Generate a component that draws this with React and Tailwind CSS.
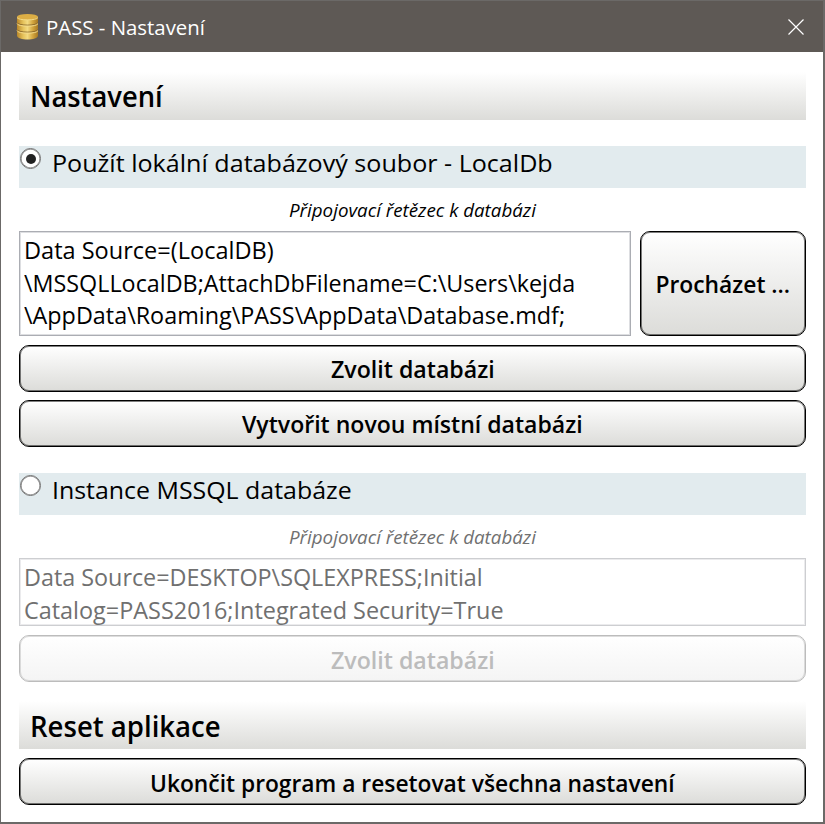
import { useLayoutEffect, useRef, useState } from "react";

// Single line of text condensed horizontally to a given advance width.
function Line({ width, origin = "origin-left", children }) {
  const ref = useRef(null);
  const [scale, setScale] = useState(1);
  useLayoutEffect(() => {
    setScale(width / ref.current.offsetWidth);
  }, [width, children]);
  return (
    <span
      ref={ref}
      className={`inline-block whitespace-pre ${origin}`}
      style={{ transform: `scaleX(${scale})` }}
    >
      {children}
    </span>
  );
}

function DatabaseIcon() {
  return (
    <svg width="24" height="28" viewBox="0 0 24 28" className="shrink-0">
      <defs>
        <linearGradient id="gold" x1="0" x2="1">
          <stop offset="0" stopColor="#b9872a" />
          <stop offset="0.3" stopColor="#e6c35c" />
          <stop offset="0.5" stopColor="#f3da80" />
          <stop offset="0.75" stopColor="#d3a63f" />
          <stop offset="1" stopColor="#a67822" />
        </linearGradient>
      </defs>
      <path d="M2 4V22.5C2 27.8 23 27.8 23 22.5V4Z" fill="url(#gold)" />
      <ellipse cx="12.5" cy="3.8" rx="10.5" ry="2.9" fill="#dcae45" />
      <path d="M2 9.5C3 13 22 13 23 9.5M2 16.5C3 20 22 20 23 16.5" fill="none" stroke="#86652a" strokeWidth="0.9" />
      <path d="M2 4.5C3 7.7 22 7.7 23 4.5M2 10.6C3 14.1 22 14.1 23 10.6M2 17.6C3 21.1 22 21.1 23 17.6" fill="none" stroke="#f3da8a" strokeWidth="1" />
    </svg>
  );
}

function SectionHeader({ width, className = "", children }) {
  return (
    <h2 className={`flex h-12 items-center bg-linear-to-b from-white to-[#dcdcd9] pl-[10.5px] text-[29px] leading-none font-semibold ${className}`}>
      <Line width={width}>{children}</Line>
    </h2>
  );
}

function Option({ checked, width, children }) {
  return (
    <label className="flex h-[42px] bg-[#e2ebee]">
      <span className="mt-[2px] ml-[1px] flex size-[21px] shrink-0 items-center justify-center rounded-full border border-[#707070] bg-white shadow-[inset_0_0_0_0.5px_#707070]">
        {checked && <span className="size-[10px] rounded-full bg-[#212121]" />}
      </span>
      <span className="ml-[11px] text-2xl leading-[33px]">
        <Line width={width}>{children}</Line>
      </span>
    </label>
  );
}

function Button({ width, className = "h-[47px] w-full", disabled, children }) {
  const tone = disabled
    ? "border-[#bcbcbc] to-[#f4f4f4] text-[#bcbcbc] shadow-[inset_0_0_0_1px_#bcbcbc80]"
    : "border-black to-[#dcdcd9] text-black shadow-[inset_0_0_0_1px_#00000080]";
  return (
    <button
      disabled={disabled}
      className={`flex items-center justify-center rounded-[10px] border bg-linear-to-b from-white text-2xl leading-none font-semibold ${tone} ${className}`}
    >
      <Line width={width} origin="origin-center">{children}</Line>
    </button>
  );
}

function Caption({ className, children }) {
  return (
    <p className={`flex h-[43px] items-center justify-center pt-px text-lg leading-none italic ${className}`}>
      <Line width={247} origin="origin-center">{children}</Line>
    </p>
  );
}

export default function App() {
  return (
    <div className="flex h-[824px] w-[825px] flex-col overflow-hidden border border-r-2 border-b-2 border-[#6b6967] bg-white font-['Open_Sans','Noto_Sans',sans-serif] text-black">
      <header className="flex h-[51px] shrink-0 items-center bg-[#5e5955] pl-[14px] text-white">
        <DatabaseIcon />
        <h1 className="ml-[7px] pt-0.5 text-xl leading-none">
          <Line width={159}>PASS - Nastavení</Line>
        </h1>
        <svg width="16" height="16" viewBox="0 0 16 16" className="mr-[19px] ml-auto">
          <path d="M0.5 0.5 15.5 15.5M15.5 0.5 0.5 15.5" stroke="white" strokeWidth="1.2" />
        </svg>
      </header>

      <main className="flex flex-col pt-5 pr-[17px] pl-[18px]">
        <SectionHeader width={133} className="pb-0.5">Nastavení</SectionHeader>

        <section className="mt-[26px] flex flex-col">
          <Option checked width={501}>Použít lokální databázový soubor - LocalDb</Option>
          <Caption className="text-black">Připojovací řetězec k databázi</Caption>
          <div className="flex gap-[9px]">
            <div className="h-[105px] w-[612px] border border-[#abadb3] pt-[2px] pl-1 text-2xl leading-[32.5px] shadow-[inset_0_0_0_1px_#abadb366]">
              <div className="h-[32.5px]"><Line width={250}>Data Source=(LocalDB)</Line></div>
              <div className="h-[32.5px]"><Line width={551}>{"\\MSSQLLocalDB;AttachDbFilename=C:\\Users\\kejda"}</Line></div>
              <div className="h-[32.5px]"><Line width={541}>{"\\AppData\\Roaming\\PASS\\AppData\\Database.mdf;"}</Line></div>
            </div>
            <Button width={135} className="h-[105px] w-[166px]">Procházet ...</Button>
          </div>
          <div className="mt-[9px] flex flex-col gap-2">
            <Button width={164}>Zvolit databázi</Button>
            <Button width={341}>Vytvořit novou místní databázi</Button>
          </div>
        </section>

        <section className="mt-[26px] flex flex-col">
          <Option width={300}>Instance MSSQL databáze</Option>
          <Caption className="text-[#707070]">Připojovací řetězec k databázi</Caption>
          <div className="h-[68px] border border-[#cdced1] pt-[2px] pl-1 text-2xl leading-[32.5px] text-[#707070] shadow-[inset_0_0_0_1px_#cdced166]">
            <div className="h-[32.5px]"><Line width={459}>{"Data Source=DESKTOP\\SQLEXPRESS;Initial"}</Line></div>
            <div className="h-[32.5px]"><Line width={480}>Catalog=PASS2016;Integrated Security=True</Line></div>
          </div>
          <div className="mt-[9px]">
            <Button width={164} disabled className="h-[47px] w-full pt-0.5">Zvolit databázi</Button>
          </div>
        </section>

        <section className="mt-[19px] flex flex-col gap-[9px]">
          <SectionHeader width={191}>Reset aplikace</SectionHeader>
          <Button width={525} className="h-[47px] w-full pt-0.5">Ukončit program a resetovat všechna nastavení</Button>
        </section>
      </main>
    </div>
  );
}
